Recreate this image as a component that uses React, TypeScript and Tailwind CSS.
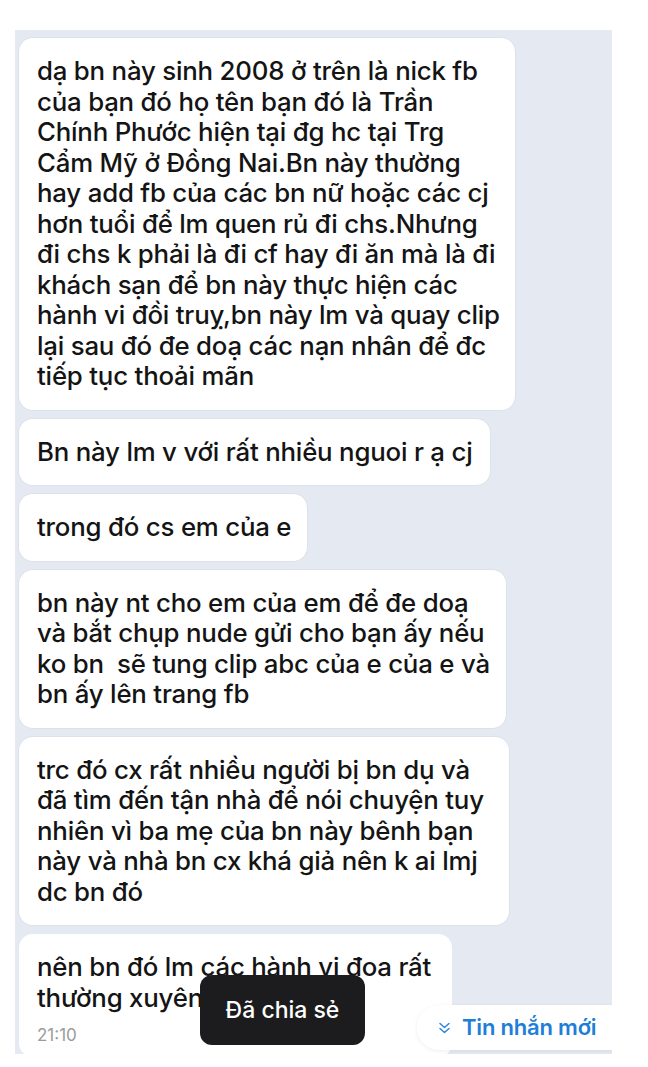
import React from "react";

const messages: { lines: string[]; width: string }[] = [
  {
    width: "w-[496px]",
    lines: [
      "dạ bn này sinh 2008 ở trên là nick fb",
      "của bạn đó họ tên bạn đó là Trần",
      "Chính Phước hiện tại đg hc tại Trg",
      "Cẩm Mỹ ở Đồng Nai.Bn này thường",
      "hay add fb của các bn nữ hoặc các cj",
      "hơn tuổi để lm quen rủ đi chs.Nhưng",
      "đi chs k phải là đi cf hay đi ăn mà là đi",
      "khách sạn để bn này thực hiện các",
      "hành vi đồi truỵ,bn này lm và quay clip",
      "lại sau đó đe doạ các nạn nhân để đc",
      "tiếp tục thoải mãn",
    ],
  },
  { width: "w-[471px]", lines: ["Bn này lm v với rất nhiều nguoi r ạ cj"] },
  { width: "w-[288px]", lines: ["trong đó cs em của e"] },
  {
    width: "w-[487px]",
    lines: [
      "bn này nt cho em của em để đe doạ",
      "và bắt chụp nude gửi cho bạn ấy nếu",
      "ko bn  sẽ tung clip abc của e của e và",
      "bn ấy lên trang fb",
    ],
  },
  {
    width: "w-[490px]",
    lines: [
      "trc đó cx rất nhiều người bị bn dụ và",
      "đã tìm đến tận nhà để nói chuyện tuy",
      "nhiên vì ba mẹ của bn này bênh bạn",
      "này và nhà bn cx khá giả nên k ai lmj",
      "dc bn đó",
    ],
  },
];

const Bubble = ({ lines, width }: { lines: string[]; width: string }) => (
  <div
    className={`${width} rounded-[14px] bg-white px-[18px] py-[18px] shadow-[0_0_0_1px_rgba(0,0,0,0.03)]`}
  >
    {lines.map((l, i) => (
      <div
        key={i}
        className="whitespace-pre text-[25.8px] font-medium leading-[30.5px] tracking-[-0.2px] text-[#141414]"
      >
        {l}
      </div>
    ))}
  </div>
);

const App: React.FC = () => {
  return (
    <div
      className="min-h-[1067px] w-[648px] bg-white pt-[30px] pl-[15px]"
      style={{ fontFamily: "Inter, 'Liberation Sans', sans-serif" }}
    >
      <div className="relative h-[1024px] w-[597px] overflow-hidden bg-[#e5e9f2]">
        <div className="flex flex-col gap-[9px] pt-[8px] pl-[4px]">
          {messages.map((m, i) => (
            <Bubble key={i} lines={m.lines} width={m.width} />
          ))}

          <div className="w-[433px] rounded-[14px] bg-white px-[18px] pt-[18px] pb-[12px]">
            <div className="text-[25.8px] font-medium leading-[30.5px] tracking-[-0.2px] text-[#141414]">
              nên bn đó lm các hành vi đoa rất
            </div>
            <div className="text-[25.8px] font-medium leading-[30.5px] tracking-[-0.2px] text-[#141414]">
              thường xuyên
            </div>
            <div className="mt-[12px] text-[17px] leading-[20px] text-[#9b9b9b]">21:10</div>
          </div>
        </div>

        {/* toast */}
        <div className="absolute left-[185px] top-[945px] flex h-[70px] w-[165px] items-center justify-center rounded-[12px] bg-[#1c1c1e]">
          <span className="text-[23px] font-medium text-white">Đã chia sẻ</span>
        </div>

        {/* new messages pill */}
        <div className="absolute left-[402px] top-[975px] flex h-[45px] w-[220px] items-center gap-[11px] rounded-l-[22px] bg-white pl-[21px] shadow-[0_1px_4px_rgba(0,0,0,0.07)]">
          <svg width="13" height="14" viewBox="0 0 13 14" fill="none" stroke="#2d86db" strokeWidth="1.5" strokeLinecap="round" strokeLinejoin="round">
            <path d="M2 2.5 L6.5 6.5 L11 2.5" />
            <path d="M2 7.5 L6.5 11.5 L11 7.5" />
          </svg>
          <span className="text-[22px] font-semibold tracking-[-0.2px] text-[#1e7fd8]">Tin nhắn mới</span>
        </div>
      </div>
    </div>
  );
};

export default App;
